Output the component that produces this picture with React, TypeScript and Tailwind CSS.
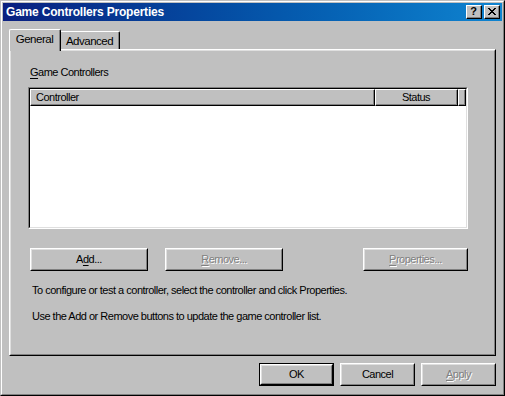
import type { ReactNode } from "react";

type BtnProps = {
  children: ReactNode;
  width: string;
  disabled?: boolean;
  isDefault?: boolean;
};

function Btn({ children, width, disabled, isDefault }: Readonly<BtnProps>) {
  const face = (
    <div className="h-full w-full border border-t-white border-l-white border-r-black border-b-black">
      <div
        className={
          "flex h-full w-full items-center justify-center border border-t-[#dfdfdf] border-l-[#dfdfdf] border-r-[#808080] border-b-[#808080] " +
          (disabled
            ? "text-[#808080] [text-shadow:1px_1px_0_#fff]"
            : "text-black")
        }
      >
        {children}
      </div>
    </div>
  );

  if (isDefault) {
    return (
      <div className={"h-[23px] border border-black " + width}>{face}</div>
    );
  }
  return <div className={"h-[23px] " + width}>{face}</div>;
}

function U({ children }: Readonly<{ children: ReactNode }>) {
  return <span className="underline underline-offset-[2px]">{children}</span>;
}

function CaptionButton({ children }: Readonly<{ children: ReactNode }>) {
  return (
    <div className="h-[14px] w-[16px] border border-t-white border-l-white border-r-black border-b-black bg-[#c0c0c0]">
      <div className="flex h-full w-full items-center justify-center border-r border-b border-r-[#808080] border-b-[#808080]">
        {children}
      </div>
    </div>
  );
}

function HeaderCell({
  children,
  width,
  center,
}: Readonly<{ children?: ReactNode; width: string; center?: boolean }>) {
  return (
    <div
      className={
        "h-full border border-t-white border-l-white border-r-black border-b-black " +
        width
      }
    >
      <div
        className={
          "flex h-full items-center border-r border-b border-r-[#808080] border-b-[#808080] " +
          (center ? "justify-center" : "pl-[5px]")
        }
      >
        {children}
      </div>
    </div>
  );
}

export default function App() {
  return (
    <div className="h-[396px] w-[505px] bg-[#c0c0c0] text-[11px] leading-[13px] tracking-[-0.5px] text-black [font-family:'Liberation_Sans',Arial,sans-serif]">
      {/* window frame */}
      <div className="h-full w-full border border-t-[#c0c0c0] border-l-[#c0c0c0] border-r-black border-b-black">
        <div className="flex h-full w-full flex-col border border-t-white border-l-white border-r-[#808080] border-b-[#808080] p-[1px]">
          {/* title bar */}
          <div className="flex h-[18px] items-center bg-gradient-to-r from-[#0a1f80] to-[#1084d0] pr-[2px] pl-[3px]">
            <span className="flex-1 text-[12px] font-bold tracking-[-0.2px] text-white">
              Game Controllers Properties
            </span>
            <div className="flex gap-[2px]">
              <CaptionButton>
                <span className="text-[11px] leading-none font-bold tracking-normal">
                  ?
                </span>
              </CaptionButton>
              <CaptionButton>
                <svg
                  width="8"
                  height="7"
                  viewBox="0 0 8 7"
                  shapeRendering="crispEdges"
                >
                  <path
                    d="M0 0h2v1H0zM6 0h2v1H6zM1 1h2v1H1zM5 1h2v1H5zM2 2h4v1H2zM3 3h2v1H3zM2 4h4v1H2zM1 5h2v1H1zM5 5h2v1H5zM0 6h2v1H0zM6 6h2v1H6z"
                    fill="#000"
                  />
                </svg>
              </CaptionButton>
            </div>
          </div>

          {/* client area */}
          <div className="flex flex-1 flex-col px-[6px] pt-[8px]">
            {/* tabs */}
            <div className="relative z-10 flex h-[20px] items-start">
              <div className="h-[22px] w-[52px] rounded-tl-[2px] rounded-tr-[2px] border-t border-l border-r border-t-white border-l-white border-r-black bg-[#c0c0c0]">
                <div className="flex h-full items-start justify-center border-r border-r-[#808080] pt-[3px] text-[11.5px]">
                  General
                </div>
              </div>
              <div className="mt-[2px] h-[18px] w-[59px] rounded-tr-[2px] border-t border-r border-t-white border-r-black">
                <div className="flex h-full items-start justify-center border-r border-r-[#808080] pt-[3px] text-[11.5px]">
                  Advanced
                </div>
              </div>
            </div>

            {/* tab panel */}
            <div className="h-[307px] w-[487px] border border-t-white border-l-white border-r-black border-b-black">
              <div className="flex h-full flex-col border border-t-[#dfdfdf] border-l-[#dfdfdf] border-r-[#808080] border-b-[#808080] pl-[17px]">
                <div className="mt-[15px] pl-[2px]">
                  <U>G</U>ame Controllers
                </div>

                {/* list view */}
                <div className="mt-[8px] h-[142px] w-[440px] border border-t-[#808080] border-l-[#808080] border-r-white border-b-white">
                  <div className="h-full border border-t-black border-l-black border-r-[#dfdfdf] border-b-[#dfdfdf] bg-white">
                    <div className="flex h-[17px] bg-[#c0c0c0]">
                      <HeaderCell width="w-[345px]">Controller</HeaderCell>
                      <HeaderCell width="w-[83px]" center>
                        Status
                      </HeaderCell>
                      <HeaderCell width="w-[8px]" />
                    </div>
                  </div>
                </div>

                <div className="mt-[19px] flex w-[440px] pl-[2px]">
                  <Btn width="w-[118px]">
                    A<U>d</U>d...
                  </Btn>
                  <div className="ml-[17px]">
                    <Btn width="w-[118px]" disabled>
                      <U>R</U>emove...
                    </Btn>
                  </div>
                  <div className="ml-auto">
                    <Btn width="w-[105px]" disabled>
                      <U>P</U>roperties...
                    </Btn>
                  </div>
                </div>

                <p className="mt-[13px] pl-[4px]">
                  To configure or test a controller, select the controller and
                  click Properties.
                </p>
                <p className="mt-[13px] pl-[4px]">
                  Use the Add or Remove buttons to update the game controller
                  list.
                </p>
              </div>
            </div>

            {/* dialog buttons */}
            <div className="mt-[7px] flex justify-end gap-[6px]">
              <Btn width="w-[75px]" isDefault>
                OK
              </Btn>
              <Btn width="w-[75px]">Cancel</Btn>
              <Btn width="w-[75px]" disabled>
                <U>A</U>pply
              </Btn>
            </div>
          </div>
        </div>
      </div>
    </div>
  );
}
